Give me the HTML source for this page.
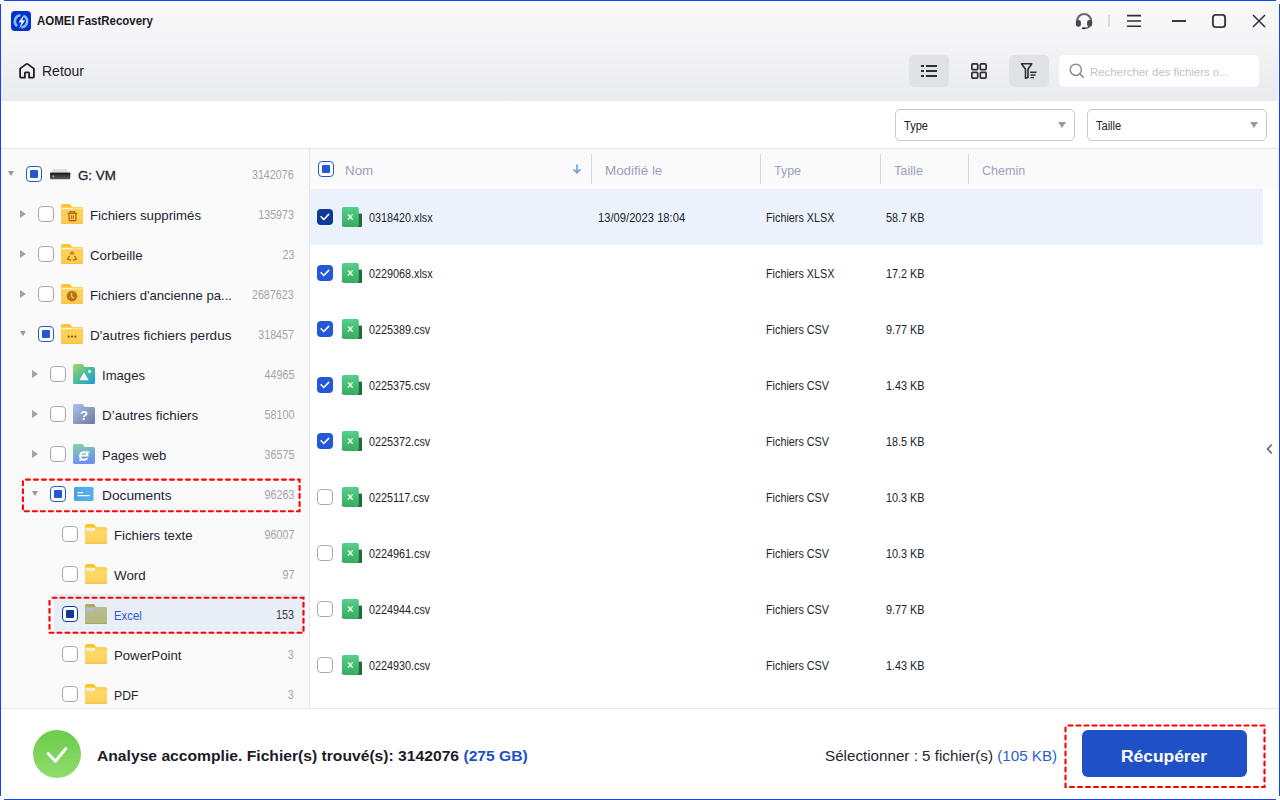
<!DOCTYPE html>
<html><head><meta charset="utf-8">
<style>
*{margin:0;padding:0;box-sizing:border-box}
html,body{width:1280px;height:800px;overflow:hidden;background:#fff;font-family:"Liberation Sans",sans-serif;color:#1f1f2b}
.a{position:absolute}
#win{position:absolute;left:0;top:0;width:1280px;height:800px;border:1px solid #1f4cf6;border-radius:4px;pointer-events:none;z-index:50}
#hdr{left:0;top:0;width:1280px;height:101px;background:linear-gradient(#f9f9f9 0px,#f5f5f7 40px,#e9eaee 101px)}
.t{position:absolute;white-space:nowrap;line-height:1}
.btn{position:absolute;border-radius:5px;background:#e1e2e6}
#left{left:0;top:149px;width:309px;height:559px;background:#fafafa;overflow:hidden}
#sep{left:309px;top:149px;width:1px;height:559px;background:#e6e6ee}
#thead{left:310px;top:149px;width:970px;height:40px;background:#fafafa}
.hs{position:absolute;top:154px;width:1px;height:30px;background:#d6d7de}
.ht{position:absolute;top:164px;font-size:13.4px;color:#9ba0bf;line-height:1;white-space:nowrap}
.cb{position:absolute;width:16px;height:16px;border-radius:4px;border:1.3px solid #a9a9ad;background:#fff}
.cbp{border:1.5px solid #2358d6}
.cbp::after{content:"";position:absolute;left:2.7px;top:2.7px;width:8px;height:8px;background:#2358d6;border-radius:1px}
.cbn{border:1.5px solid #0c3a96}
.cbn::after{content:"";position:absolute;left:2.7px;top:2.7px;width:8px;height:8px;background:#0c3a96;border-radius:1px}
.cbc{background:#2358d6;border:none}
.cbd{background:#0c3a96;border:none}
.tl{position:absolute;font-size:13.5px;line-height:1;white-space:nowrap;color:#222430;transform-origin:left center}
.cnt{position:absolute;right:15px;font-size:12px;color:#a3a3a8;line-height:1;text-align:right;transform:scaleX(0.895);transform-origin:right center;white-space:nowrap}
.arr{position:absolute;width:0;height:0}
.ad{border-left:3.6px solid transparent;border-right:3.6px solid transparent;border-top:5.5px solid #9a9a9e}
.ar{border-top:4px solid transparent;border-bottom:4px solid transparent;border-left:6px solid #a3a3a7}
.row{position:absolute;left:310px;width:953px;height:56px}
.rt{position:absolute;font-size:12px;line-height:1;white-space:nowrap;color:#22242c;transform:scaleX(0.9);transform-origin:left center}
</style></head><body>
<div class="a" style="left:4px;top:0;width:1272px;height:1px;background:#1144ff;z-index:50"></div>
<div class="a" style="left:4px;top:799px;width:1272px;height:1px;background:#1144ff;z-index:50"></div>
<div class="a" style="left:0;top:4px;width:1px;height:792px;background:#1144ff;z-index:50"></div>
<div class="a" style="left:1279px;top:4px;width:1px;height:792px;background:#1144ff;z-index:50"></div>
<div class="a" style="left:1278px;top:0;width:1px;height:800px;background:#fff;z-index:49"></div>
<div class="a" id="hdr"></div>

<!-- title bar -->
<svg class="a" style="left:11px;top:11px" width="20" height="20" viewBox="0 0 20 20">
  <rect x="0" y="0" width="20" height="20" rx="4" fill="#0533c9"/>
  <path d="M9.47 4.22 A6.1 6.1 0 0 0 6.16 15.04" stroke="#80c2f8" stroke-width="2.5" fill="none"/>
  <path d="M12.86 4.91 A6.1 6.1 0 0 1 10.43 16.39" stroke="#80c2f8" stroke-width="2.5" fill="none"/>
  <path d="M13.3 3.4 L7.5 11.5 L10.6 11.2 L8.0 18.1 L14.1 9.2 L11.2 9.5 Z" fill="#fff"/>
</svg>
<div class="t" style="left:37px;top:15px;font-size:12px;font-weight:bold;color:#1a1a24;transform:scaleX(0.955);transform-origin:left">AOMEI FastRecovery</div>

<!-- headset -->
<svg class="a" style="left:1075px;top:12px" width="18" height="18" viewBox="0 0 18 18">
  <path d="M2.1 11 V9 A7 7 0 0 1 16.1 9 V11" stroke="#6a6a6e" stroke-width="2.2" fill="none"/>
  <rect x="0.9" y="7.9" width="5" height="6.9" rx="2.3" fill="#48484c"/>
  <rect x="12.1" y="7.9" width="5" height="6.9" rx="2.3" fill="#48484c"/>
  <path d="M14.6 14 Q13.6 16.2 9.6 16.3" stroke="#48484c" stroke-width="1.3" fill="none"/>
  <ellipse cx="8.6" cy="16.3" rx="1.9" ry="1.05" fill="#2e2e32"/>
</svg>
<div class="a" style="left:1108px;top:15px;width:2px;height:12px;background:#dcdde2"></div>
<svg class="a" style="left:1126px;top:13px" width="16" height="16" viewBox="0 0 16 16">
  <path d="M1 2.6H15M1 8H15M1 13.3H15" stroke="#2e2e34" stroke-width="1.6"/>
</svg>
<div class="a" style="left:1172px;top:20px;width:14px;height:1.8px;background:#3a3a40"></div>
<svg class="a" style="left:1211px;top:13px" width="16" height="16" viewBox="0 0 16 16"><rect x="1.9" y="1.9" width="12.2" height="12.2" rx="2.6" stroke="#38383e" stroke-width="1.9" fill="none"/></svg>
<svg class="a" style="left:1252px;top:14px" width="14" height="14" viewBox="0 0 14 14">
  <path d="M1 1L13 13M13 1L1 13" stroke="#2e2e34" stroke-width="1.5"/>
</svg>

<!-- toolbar -->
<svg class="a" style="left:19px;top:62px" width="17" height="17" viewBox="0 0 17 17">
  <path d="M1.1 6.6 L7.2 2.1 Q8 1.5 8.8 2.1 L14.9 6.6 V14.7 Q14.9 15.7 13.9 15.7 H10.1 V11 Q10.1 10.3 9.4 10.3 H6.6 Q5.9 10.3 5.9 11 V15.7 H2.1 Q1.1 15.7 1.1 14.7 Z" stroke="#1e1e24" stroke-width="1.8" fill="none" stroke-linejoin="round"/>
</svg>
<div class="t" style="left:42px;top:64px;font-size:14px;color:#1c1c26">Retour</div>

<div class="btn" style="left:909px;top:55px;width:40px;height:32px"></div>
<svg class="a" style="left:920px;top:63px" width="18" height="16" viewBox="0 0 18 16">
  <path d="M1 3H4M6 3H17M1 8H4M6 8H17M1 13H4M6 13H17" stroke="#2e2e34" stroke-width="1.8"/>
</svg>
<svg class="a" style="left:971px;top:63px" width="16" height="16" viewBox="0 0 16 16">
  <rect x="0.9" y="0.9" width="5.8" height="5.8" rx="1" stroke="#2e2e34" stroke-width="1.7" fill="none"/>
  <rect x="9.3" y="0.9" width="5.8" height="5.8" rx="1" stroke="#2e2e34" stroke-width="1.7" fill="none"/>
  <rect x="0.9" y="9.3" width="5.8" height="5.8" rx="1" stroke="#2e2e34" stroke-width="1.7" fill="none"/>
  <rect x="9.3" y="9.3" width="5.8" height="5.8" rx="1" stroke="#2e2e34" stroke-width="1.7" fill="none"/>
</svg>
<div class="btn" style="left:1009px;top:55px;width:40px;height:32px"></div>
<svg class="a" style="left:1020px;top:62px" width="18" height="18" viewBox="0 0 18 18">
  <path d="M1.5 1.8 H11.8 L8 7.2 V15.5 L5.5 16.2 V7.2 Z" stroke="#2e2e34" stroke-width="1.6" fill="none" stroke-linejoin="round"/>
  <path d="M10 10.3H16.5M10.5 13H15.5M10.5 15.6H14" stroke="#2e2e34" stroke-width="1.4"/>
</svg>
<div class="a" style="left:1059px;top:55px;width:200px;height:32px;background:#fff;border-radius:5px"></div>
<svg class="a" style="left:1069px;top:63px" width="16" height="16" viewBox="0 0 16 16">
  <circle cx="6.8" cy="6.8" r="5.6" stroke="#8a8a90" stroke-width="1.5" fill="none"/>
  <path d="M10.8 10.8L14.6 14.6" stroke="#8a8a90" stroke-width="1.6"/>
</svg>
<div class="t" style="left:1090px;top:67px;font-size:11.4px;color:#c2c2c6">Rechercher des fichiers o...</div>

<!-- filter row -->
<div class="a" style="left:1px;top:148px;width:1278px;height:1px;background:#e3e4eb"></div>
<div class="a" style="left:895px;top:109px;width:180px;height:32px;border:1px solid #c9c9cd;border-radius:5px;background:#fff"></div>
<div class="t" style="left:904px;top:120px;font-size:12px;color:#222;transform:scaleX(0.92);transform-origin:left">Type</div>
<div class="arr a" style="left:1057.5px;top:122px;border-left:4.5px solid transparent;border-right:4.5px solid transparent;border-top:6px solid #9a9a9e"></div>
<div class="a" style="left:1087px;top:109px;width:180px;height:32px;border:1px solid #c9c9cd;border-radius:5px;background:#fff"></div>
<div class="t" style="left:1096px;top:120px;font-size:12px;color:#222;transform:scaleX(0.92);transform-origin:left">Taille</div>
<div class="arr a" style="left:1249.5px;top:122px;border-left:4.5px solid transparent;border-right:4.5px solid transparent;border-top:6px solid #9a9a9e"></div>

<!-- left tree -->
<div class="a" id="left">
<svg width="0" height="0" style="position:absolute"><defs>
<linearGradient id="fy" x1="0" y1="0" x2="0" y2="1"><stop offset="0" stop-color="#fdd45c"/><stop offset="1" stop-color="#fccb4a"/></linearGradient>
<linearGradient id="fy2" x1="0" y1="0" x2="0" y2="1"><stop offset="0" stop-color="#fedb6e"/><stop offset="1" stop-color="#fccf54"/></linearGradient>
<linearGradient id="fo" x1="0" y1="0" x2="0" y2="1"><stop offset="0" stop-color="#b8bd8e"/><stop offset="1" stop-color="#b3b67e"/></linearGradient>
<linearGradient id="fimg" x1="0" y1="0" x2="1" y2="1"><stop offset="0" stop-color="#a6d868"/><stop offset=".5" stop-color="#4cbc96"/><stop offset="1" stop-color="#1a98e8"/></linearGradient>
<linearGradient id="fq" x1="0" y1="0" x2="1" y2="1"><stop offset="0" stop-color="#a8c4ee"/><stop offset="1" stop-color="#72769c"/></linearGradient>
<linearGradient id="fie" x1="0" y1="0" x2="0.3" y2="1"><stop offset="0" stop-color="#84d898"/><stop offset=".45" stop-color="#78b6cc"/><stop offset="1" stop-color="#7090ee"/></linearGradient>
<linearGradient id="fdoc" x1="0" y1="0" x2="1" y2="0"><stop offset="0" stop-color="#4c9ae6"/><stop offset=".3" stop-color="#52a8ea"/><stop offset="1" stop-color="#56b0ec"/></linearGradient>
<linearGradient id="xl" x1="0" y1="0" x2="0" y2="1"><stop offset="0" stop-color="#55cf8a"/><stop offset="1" stop-color="#3aaa62"/></linearGradient>
<linearGradient id="drv" x1="0" y1="0" x2="0" y2="1"><stop offset="0" stop-color="#1e1e1e"/><stop offset="1" stop-color="#5a5a5a"/></linearGradient>
</defs></svg>
<div class="arr ad" style="left:7.5px;top:22px"></div>
<div class="cb cbp" style="left:26px;top:17px"></div>
<svg class="a" style="left:49px;top:19px" width="22" height="12" viewBox="0 0 22 12"><path d="M4.6 1H17.4L20.4 5H1.6Z" fill="#dfdfe3"/><rect x="1" y="4.8" width="20.3" height="6.4" rx="1" fill="url(#drv)"/><rect x="1" y="4.8" width="20.3" height="1.3" fill="#1a1a1a"/><circle cx="4.5" cy="8.3" r="1.1" fill="#46dc46"/></svg>
<div class="tl" style="left:78px;top:20.0px;color:#222430;transform:scaleX(0.988);-webkit-text-stroke:0.3px #222430">G: VM</div>
<div class="cnt" style="top:20.2px;color:#a3a3a8">3142076</div>
<div class="arr ar" style="left:20px;top:61px"></div>
<div class="cb " style="left:38px;top:57px"></div>
<svg class="a" style="left:61px;top:55px" width="22" height="20" viewBox="0 0 22 20"><path d="M0 1.8Q0 0 1.8 0H8.4Q9.3 0 9.8 0.9L11.2 3.6H0Z" fill="#fbc42a"/><rect x="0" y="3" width="22" height="17" rx="1.4" fill="url(#fy)"/><rect x="1.2" y="4" width="10" height="1.1" fill="#fff" opacity=".85"/><rect x="11" y="4" width="9.5" height="1" fill="#fff" opacity=".35"/><rect x="0.6" y="19" width="20.8" height="1" fill="#f0bd48" opacity=".7"/><path d="M6.6 9.3H16.2" stroke="#b06a1e" stroke-width="1.4"/><path d="M9.3 9.2V7.6H13.6V9.2" stroke="#b06a1e" stroke-width="1.3" fill="none"/><path d="M8.1 10V15.8Q8.1 16.8 9.1 16.8H13.9Q14.9 16.8 14.9 15.8V10" stroke="#b06a1e" stroke-width="1.4" fill="none"/><path d="M10.6 11.2V15.2M12.4 11.2V15.2" stroke="#b06a1e" stroke-width="1.1"/></svg>
<div class="tl" style="left:90px;top:60.0px;color:#222430;transform:scaleX(0.98)">Fichiers supprimés</div>
<div class="cnt" style="top:60.2px;color:#a3a3a8">135973</div>
<div class="arr ar" style="left:20px;top:101px"></div>
<div class="cb " style="left:38px;top:97px"></div>
<svg class="a" style="left:61px;top:95px" width="22" height="20" viewBox="0 0 22 20"><path d="M0 1.8Q0 0 1.8 0H8.4Q9.3 0 9.8 0.9L11.2 3.6H0Z" fill="#fbc42a"/><rect x="0" y="3" width="22" height="17" rx="1.4" fill="url(#fy)"/><rect x="1.2" y="4" width="10" height="1.1" fill="#fff" opacity=".85"/><rect x="11" y="4" width="9.5" height="1" fill="#fff" opacity=".35"/><rect x="0.6" y="19" width="20.8" height="1" fill="#f0bd48" opacity=".7"/><path d="M9.4 10.1L11 7.9L12.6 10.1M8.2 12.6L6.6 15.2L9.6 15.9M13.8 12.6L15.4 15.2L12.4 15.9" stroke="#b87222" stroke-width="1.5" fill="none" stroke-linecap="round" stroke-linejoin="round"/></svg>
<div class="tl" style="left:90px;top:100.0px;color:#222430;transform:scaleX(0.986)">Corbeille</div>
<div class="cnt" style="top:100.2px;color:#a3a3a8">23</div>
<div class="arr ar" style="left:20px;top:141px"></div>
<div class="cb " style="left:38px;top:137px"></div>
<svg class="a" style="left:61px;top:135px" width="22" height="20" viewBox="0 0 22 20"><path d="M0 1.8Q0 0 1.8 0H8.4Q9.3 0 9.8 0.9L11.2 3.6H0Z" fill="#fbc42a"/><rect x="0" y="3" width="22" height="17" rx="1.4" fill="url(#fy)"/><rect x="1.2" y="4" width="10" height="1.1" fill="#fff" opacity=".85"/><rect x="11" y="4" width="9.5" height="1" fill="#fff" opacity=".35"/><rect x="0.6" y="19" width="20.8" height="1" fill="#f0bd48" opacity=".7"/><circle cx="11" cy="12.1" r="5.3" fill="#b8701e"/><path d="M10.6 8.8V12.4L12.6 14.4" stroke="#fcd462" stroke-width="1.2" fill="none"/></svg>
<div class="tl" style="left:90px;top:140.0px;color:#222430;transform:scaleX(0.973)">Fichiers d'ancienne pa...</div>
<div class="cnt" style="top:140.2px;color:#a3a3a8">2687623</div>
<div class="arr ad" style="left:19.5px;top:182px"></div>
<div class="cb cbp" style="left:38px;top:177px"></div>
<svg class="a" style="left:61px;top:175px" width="22" height="20" viewBox="0 0 22 20"><path d="M0 1.8Q0 0 1.8 0H8.4Q9.3 0 9.8 0.9L11.2 3.6H0Z" fill="#fbc42a"/><rect x="0" y="3" width="22" height="17" rx="1.4" fill="url(#fy)"/><rect x="1.2" y="4" width="10" height="1.1" fill="#fff" opacity=".85"/><rect x="11" y="4" width="9.5" height="1" fill="#fff" opacity=".35"/><rect x="0.6" y="19" width="20.8" height="1" fill="#f0bd48" opacity=".7"/><circle cx="7.6" cy="12.6" r="1.05" fill="#7a4e10"/><circle cx="11" cy="12.6" r="1.05" fill="#7a4e10"/><circle cx="14.4" cy="12.6" r="1.05" fill="#7a4e10"/></svg>
<div class="tl" style="left:90px;top:180.0px;color:#222430;transform:scaleX(1.0)">D'autres fichiers perdus</div>
<div class="cnt" style="top:180.2px;color:#a3a3a8">318457</div>
<div class="arr ar" style="left:32px;top:221px"></div>
<div class="cb " style="left:50px;top:217px"></div>
<svg class="a" style="left:73px;top:215px" width="22" height="20" viewBox="0 0 22 20"><path d="M0 1.6Q0 0 1.6 0H9.6L11.6 3H20.4Q22 3 22 4.6V18.4Q22 20 20.4 20H1.6Q0 20 0 18.4Z" fill="url(#fimg)"/><path d="M6.3 16.2L11 8.2L15.7 16.2Z" fill="#f4f4fb"/><circle cx="16.5" cy="7.5" r="1.4" fill="#fff"/></svg>
<div class="tl" style="left:102px;top:220.0px;color:#222430;transform:scaleX(0.971)">Images</div>
<div class="cnt" style="top:220.2px;color:#a3a3a8">44965</div>
<div class="arr ar" style="left:32px;top:261px"></div>
<div class="cb " style="left:50px;top:257px"></div>
<svg class="a" style="left:73px;top:255px" width="22" height="20" viewBox="0 0 22 20"><path d="M0 1.6Q0 0 1.6 0H9.6L11.6 3H20.4Q22 3 22 4.6V18.4Q22 20 20.4 20H1.6Q0 20 0 18.4Z" fill="url(#fq)"/><text x="11" y="16.2" font-family="Liberation Sans" font-size="13" font-weight="bold" fill="#fff" text-anchor="middle">?</text></svg>
<div class="tl" style="left:102px;top:260.0px;color:#222430;transform:scaleX(0.995)">D’autres fichiers</div>
<div class="cnt" style="top:260.2px;color:#a3a3a8">58100</div>
<div class="arr ar" style="left:32px;top:301px"></div>
<div class="cb " style="left:50px;top:297px"></div>
<svg class="a" style="left:73px;top:295px" width="22" height="20" viewBox="0 0 22 20"><path d="M0 1.6Q0 0 1.6 0H9.6L11.6 3H20.4Q22 3 22 4.6V18.4Q22 20 20.4 20H1.6Q0 20 0 18.4Z" fill="url(#fie)"/><path d="M7.2 11.6H14.6Q14.6 8.2 11 8.2Q7.1 8.2 7.1 12Q7.1 15.8 11 15.8Q13.2 15.8 14.2 14.3" stroke="#fff" stroke-width="1.9" fill="none"/><path d="M12.8 7.6Q16.8 6.2 15.6 9.4M7.6 14.6Q5.2 17.6 8.2 16.4" stroke="#fff" stroke-width="1" fill="none"/></svg>
<div class="tl" style="left:102px;top:300.0px;color:#222430;transform:scaleX(0.962)">Pages web</div>
<div class="cnt" style="top:300.2px;color:#a3a3a8">36575</div>
<div class="arr ad" style="left:31.5px;top:342px"></div>
<div class="cb cbp" style="left:50px;top:337px"></div>
<svg class="a" style="left:74.2px;top:338px" width="20" height="15" viewBox="0 0 20 15"><rect x="0" y="0" width="19.5" height="14" rx="1.5" fill="url(#fdoc)"/><path d="M4 5.6H8.6M4 8.6H15.2" stroke="#fff" stroke-width="1.4" stroke-linecap="round"/></svg>
<div class="tl" style="left:102px;top:340.0px;color:#222430;transform:scaleX(1.018)">Documents</div>
<div class="cnt" style="top:340.2px;color:#a3a3a8">96263</div>
<div class="cb " style="left:62px;top:377px"></div>
<svg class="a" style="left:85px;top:375px" width="22" height="20" viewBox="0 0 22 20"><path d="M0 1.8Q0 0 1.8 0H8.4Q9.3 0 9.8 0.9L11.2 3.6H0Z" fill="#fbc42a"/><rect x="0" y="3" width="22" height="17" rx="1.4" fill="url(#fy)"/><rect x="1.3" y="4.1" width="8.6" height="2.7" fill="#f3f3fb"/><rect x="0" y="6.5" width="22" height="13.5" rx="1.2" fill="url(#fy2)"/><rect x="0.6" y="19" width="20.8" height="1" fill="#f0bd48" opacity=".7"/></svg>
<div class="tl" style="left:114px;top:380.0px;color:#222430;transform:scaleX(0.978)">Fichiers texte</div>
<div class="cnt" style="top:380.2px;color:#a3a3a8">96007</div>
<div class="cb " style="left:62px;top:417px"></div>
<svg class="a" style="left:85px;top:415px" width="22" height="20" viewBox="0 0 22 20"><path d="M0 1.8Q0 0 1.8 0H8.4Q9.3 0 9.8 0.9L11.2 3.6H0Z" fill="#fbc42a"/><rect x="0" y="3" width="22" height="17" rx="1.4" fill="url(#fy)"/><rect x="1.3" y="4.1" width="8.6" height="2.7" fill="#f3f3fb"/><rect x="0" y="6.5" width="22" height="13.5" rx="1.2" fill="url(#fy2)"/><rect x="0.6" y="19" width="20.8" height="1" fill="#f0bd48" opacity=".7"/></svg>
<div class="tl" style="left:114px;top:420.0px;color:#222430;transform:scaleX(0.992)">Word</div>
<div class="cnt" style="top:420.2px;color:#a3a3a8">97</div>
<div class="a" style="left:54px;top:445px;width:251px;height:40px;background:#e8edf6"></div>
<div class="cb cbn" style="left:62px;top:457px"></div>
<svg class="a" style="left:85px;top:455px" width="22" height="20" viewBox="0 0 22 20"><path d="M0 1.8Q0 0 1.8 0H8.4Q9.3 0 9.8 0.9L11.2 3.6H0Z" fill="#b0a862"/><rect x="0" y="3" width="22" height="17" rx="1.4" fill="url(#fo)"/><rect x="1.3" y="4.1" width="8.6" height="2.8" fill="#a8bfea"/><rect x="0" y="6.6" width="22" height="13.4" rx="1.2" fill="url(#fo)"/><rect x="0.6" y="19" width="20.8" height="1" fill="#a89e58" opacity=".7"/></svg>
<div class="tl" style="left:114px;top:460.0px;color:#2a5ad8;transform:scaleX(0.84)">Excel</div>
<div class="cnt" style="top:460.2px;color:#3a3a44">153</div>
<div class="cb " style="left:62px;top:497px"></div>
<svg class="a" style="left:85px;top:495px" width="22" height="20" viewBox="0 0 22 20"><path d="M0 1.8Q0 0 1.8 0H8.4Q9.3 0 9.8 0.9L11.2 3.6H0Z" fill="#fbc42a"/><rect x="0" y="3" width="22" height="17" rx="1.4" fill="url(#fy)"/><rect x="1.3" y="4.1" width="8.6" height="2.7" fill="#f3f3fb"/><rect x="0" y="6.5" width="22" height="13.5" rx="1.2" fill="url(#fy2)"/><rect x="0.6" y="19" width="20.8" height="1" fill="#f0bd48" opacity=".7"/></svg>
<div class="tl" style="left:114px;top:500.0px;color:#222430;transform:scaleX(0.976)">PowerPoint</div>
<div class="cnt" style="top:500.2px;color:#a3a3a8">3</div>
<div class="cb " style="left:62px;top:537px"></div>
<svg class="a" style="left:85px;top:535px" width="22" height="20" viewBox="0 0 22 20"><path d="M0 1.8Q0 0 1.8 0H8.4Q9.3 0 9.8 0.9L11.2 3.6H0Z" fill="#fbc42a"/><rect x="0" y="3" width="22" height="17" rx="1.4" fill="url(#fy)"/><rect x="1.3" y="4.1" width="8.6" height="2.7" fill="#f3f3fb"/><rect x="0" y="6.5" width="22" height="13.5" rx="1.2" fill="url(#fy2)"/><rect x="0.6" y="19" width="20.8" height="1" fill="#f0bd48" opacity=".7"/></svg>
<div class="tl" style="left:114px;top:540.0px;color:#222430;transform:scaleX(0.904)">PDF</div>
<div class="cnt" style="top:540.2px;color:#a3a3a8">3</div>
</div>
<div class="a" id="sep"></div>

<!-- table header -->
<div class="a" id="thead"></div>
<div class="cb cbp" style="left:318px;top:161px"></div>
<div class="ht" style="left:345px">Nom</div>
<svg class="a" style="left:572px;top:164px" width="10" height="10" viewBox="0 0 10 10">
  <path d="M5 0.5V8.5M1.5 5.2L5 8.8L8.5 5.2" stroke="#6a9de0" stroke-width="1.6" fill="none"/>
</svg>
<div class="hs" style="left:591px"></div>
<div class="ht" style="left:605px">Modifié le</div>
<div class="hs" style="left:760px"></div>
<div class="ht" style="left:774px;transform:scaleX(0.93);transform-origin:left">Type</div>
<div class="hs" style="left:880px"></div>
<div class="ht" style="left:894px;transform:scaleX(0.95);transform-origin:left">Taille</div>
<div class="hs" style="left:968px"></div>
<div class="ht" style="left:982px;transform:scaleX(0.935);transform-origin:left">Chemin</div>

<div id="rows">
<div class="a" style="left:310px;top:189px;width:953px;height:56px;background:#ecf2fb"></div>
<div class="cb cbd" style="left:317px;top:209px"><svg class="a" style="left:0;top:0" width="16" height="16" viewBox="0 0 16 16"><path d="M4.1 7.8L6.8 10.5L11.7 5.4" stroke="#fff" stroke-width="1.6" fill="none" stroke-linecap="round" stroke-linejoin="round"/></svg></div>
<svg class="a" style="left:342px;top:207px" width="21" height="21" viewBox="0 0 21 21"><rect x="13" y="6.5" width="7" height="13.5" rx="1.2" fill="#1e6b3c"/><rect x="0" y="0" width="16.8" height="20" rx="1.8" fill="url(#xl)"/><path d="M6 7.4L10.6 12.6M10.6 7.4L6 12.6" stroke="#f4fff4" stroke-width="1.4"/></svg>
<div class="rt" style="left:369px;top:212.3px">0318420.xlsx</div>
<div class="rt" style="left:597.5px;top:212.3px;transform:scaleX(0.933)">13/09/2023 18:04</div>
<div class="rt" style="left:766px;top:212.3px">Fichiers XLSX</div>
<div class="rt" style="left:886px;top:212.3px">58.7 KB</div>
<div class="cb cbc" style="left:317px;top:265px"><svg class="a" style="left:0;top:0" width="16" height="16" viewBox="0 0 16 16"><path d="M4.1 7.8L6.8 10.5L11.7 5.4" stroke="#fff" stroke-width="1.6" fill="none" stroke-linecap="round" stroke-linejoin="round"/></svg></div>
<svg class="a" style="left:342px;top:263px" width="21" height="21" viewBox="0 0 21 21"><rect x="13" y="6.5" width="7" height="13.5" rx="1.2" fill="#1e6b3c"/><rect x="0" y="0" width="16.8" height="20" rx="1.8" fill="url(#xl)"/><path d="M6 7.4L10.6 12.6M10.6 7.4L6 12.6" stroke="#f4fff4" stroke-width="1.4"/></svg>
<div class="rt" style="left:369px;top:268.3px">0229068.xlsx</div>
<div class="rt" style="left:766px;top:268.3px">Fichiers XLSX</div>
<div class="rt" style="left:886px;top:268.3px">17.2 KB</div>
<div class="cb cbc" style="left:317px;top:321px"><svg class="a" style="left:0;top:0" width="16" height="16" viewBox="0 0 16 16"><path d="M4.1 7.8L6.8 10.5L11.7 5.4" stroke="#fff" stroke-width="1.6" fill="none" stroke-linecap="round" stroke-linejoin="round"/></svg></div>
<svg class="a" style="left:342px;top:319px" width="21" height="21" viewBox="0 0 21 21"><rect x="13" y="6.5" width="7" height="13.5" rx="1.2" fill="#1e6b3c"/><rect x="0" y="0" width="16.8" height="20" rx="1.8" fill="url(#xl)"/><path d="M6 7.4L10.6 12.6M10.6 7.4L6 12.6" stroke="#f4fff4" stroke-width="1.4"/></svg>
<div class="rt" style="left:369px;top:324.3px">0225389.csv</div>
<div class="rt" style="left:766px;top:324.3px">Fichiers CSV</div>
<div class="rt" style="left:886px;top:324.3px">9.77 KB</div>
<div class="cb cbc" style="left:317px;top:377px"><svg class="a" style="left:0;top:0" width="16" height="16" viewBox="0 0 16 16"><path d="M4.1 7.8L6.8 10.5L11.7 5.4" stroke="#fff" stroke-width="1.6" fill="none" stroke-linecap="round" stroke-linejoin="round"/></svg></div>
<svg class="a" style="left:342px;top:375px" width="21" height="21" viewBox="0 0 21 21"><rect x="13" y="6.5" width="7" height="13.5" rx="1.2" fill="#1e6b3c"/><rect x="0" y="0" width="16.8" height="20" rx="1.8" fill="url(#xl)"/><path d="M6 7.4L10.6 12.6M10.6 7.4L6 12.6" stroke="#f4fff4" stroke-width="1.4"/></svg>
<div class="rt" style="left:369px;top:380.3px">0225375.csv</div>
<div class="rt" style="left:766px;top:380.3px">Fichiers CSV</div>
<div class="rt" style="left:886px;top:380.3px">1.43 KB</div>
<div class="cb cbc" style="left:317px;top:433px"><svg class="a" style="left:0;top:0" width="16" height="16" viewBox="0 0 16 16"><path d="M4.1 7.8L6.8 10.5L11.7 5.4" stroke="#fff" stroke-width="1.6" fill="none" stroke-linecap="round" stroke-linejoin="round"/></svg></div>
<svg class="a" style="left:342px;top:431px" width="21" height="21" viewBox="0 0 21 21"><rect x="13" y="6.5" width="7" height="13.5" rx="1.2" fill="#1e6b3c"/><rect x="0" y="0" width="16.8" height="20" rx="1.8" fill="url(#xl)"/><path d="M6 7.4L10.6 12.6M10.6 7.4L6 12.6" stroke="#f4fff4" stroke-width="1.4"/></svg>
<div class="rt" style="left:369px;top:436.3px">0225372.csv</div>
<div class="rt" style="left:766px;top:436.3px">Fichiers CSV</div>
<div class="rt" style="left:886px;top:436.3px">18.5 KB</div>
<div class="cb " style="left:317px;top:489px"></div>
<svg class="a" style="left:342px;top:487px" width="21" height="21" viewBox="0 0 21 21"><rect x="13" y="6.5" width="7" height="13.5" rx="1.2" fill="#1e6b3c"/><rect x="0" y="0" width="16.8" height="20" rx="1.8" fill="url(#xl)"/><path d="M6 7.4L10.6 12.6M10.6 7.4L6 12.6" stroke="#f4fff4" stroke-width="1.4"/></svg>
<div class="rt" style="left:369px;top:492.3px">0225117.csv</div>
<div class="rt" style="left:766px;top:492.3px">Fichiers CSV</div>
<div class="rt" style="left:886px;top:492.3px">10.3 KB</div>
<div class="cb " style="left:317px;top:545px"></div>
<svg class="a" style="left:342px;top:543px" width="21" height="21" viewBox="0 0 21 21"><rect x="13" y="6.5" width="7" height="13.5" rx="1.2" fill="#1e6b3c"/><rect x="0" y="0" width="16.8" height="20" rx="1.8" fill="url(#xl)"/><path d="M6 7.4L10.6 12.6M10.6 7.4L6 12.6" stroke="#f4fff4" stroke-width="1.4"/></svg>
<div class="rt" style="left:369px;top:548.3px">0224961.csv</div>
<div class="rt" style="left:766px;top:548.3px">Fichiers CSV</div>
<div class="rt" style="left:886px;top:548.3px">10.3 KB</div>
<div class="cb " style="left:317px;top:601px"></div>
<svg class="a" style="left:342px;top:599px" width="21" height="21" viewBox="0 0 21 21"><rect x="13" y="6.5" width="7" height="13.5" rx="1.2" fill="#1e6b3c"/><rect x="0" y="0" width="16.8" height="20" rx="1.8" fill="url(#xl)"/><path d="M6 7.4L10.6 12.6M10.6 7.4L6 12.6" stroke="#f4fff4" stroke-width="1.4"/></svg>
<div class="rt" style="left:369px;top:604.3px">0224944.csv</div>
<div class="rt" style="left:766px;top:604.3px">Fichiers CSV</div>
<div class="rt" style="left:886px;top:604.3px">9.77 KB</div>
<div class="cb " style="left:317px;top:657px"></div>
<svg class="a" style="left:342px;top:655px" width="21" height="21" viewBox="0 0 21 21"><rect x="13" y="6.5" width="7" height="13.5" rx="1.2" fill="#1e6b3c"/><rect x="0" y="0" width="16.8" height="20" rx="1.8" fill="url(#xl)"/><path d="M6 7.4L10.6 12.6M10.6 7.4L6 12.6" stroke="#f4fff4" stroke-width="1.4"/></svg>
<div class="rt" style="left:369px;top:660.3px">0224930.csv</div>
<div class="rt" style="left:766px;top:660.3px">Fichiers CSV</div>
<div class="rt" style="left:886px;top:660.3px">1.43 KB</div>
</div><!--/rows-->

<!-- chevron -->
<svg class="a" style="left:1265px;top:443px" width="9" height="12" viewBox="0 0 9 12">
  <path d="M6.8 1.5L2.6 6L6.8 10.5" stroke="#5f6d94" stroke-width="1.8" fill="none"/>
</svg>

<!-- bottom bar -->
<div class="a" style="left:1px;top:708px;width:1278px;height:1px;background:#e6e6ec"></div>
<svg class="a" style="left:33px;top:730px" width="48" height="48" viewBox="0 0 48 48">
  <defs><linearGradient id="gg" x1="0" y1="0" x2="0" y2="1"><stop offset="0" stop-color="#6acc4a"/><stop offset="1" stop-color="#92dc6e"/></linearGradient></defs>
  <circle cx="24" cy="24" r="24" fill="url(#gg)"/>
  <path d="M15.2 23.7L22.5 31.1L32.8 18.6" stroke="#fff" stroke-width="3" fill="none" stroke-linecap="round" stroke-linejoin="round"/>
</svg>
<div class="t" style="left:97px;top:747.6px;font-size:15px;font-weight:bold;color:#1c1c28;transform:scaleX(1.044);transform-origin:left">Analyse accomplie. Fichier(s) trouvé(s): 3142076 <span style="color:#1f4fc6">(275 GB)</span></div>
<div class="t" style="left:825px;top:748px;font-size:15.2px;color:#26262e">Sélectionner : 5 fichier(s) <span style="color:#2f5fcf">(105 KB)</span></div>
<div class="a" style="left:1082px;top:730px;width:165px;height:47px;background:#1f50c5;border-radius:6px"></div>
<div class="t" style="left:1121px;top:747.5px;font-size:17.4px;font-weight:bold;color:#fff">Récupérer</div>

<!-- red dashed boxes -->
<svg class="a" style="left:0;top:0;z-index:40" width="1280" height="800">
  <rect x="22.9" y="479.6" width="276.7" height="31.6" fill="none" stroke="#ff0000" stroke-width="2.1" stroke-dasharray="4 4" stroke-linecap="round" stroke-dashoffset="-3"/>
  <rect x="49.5" y="597.8" width="254" height="35" fill="none" stroke="#ff0000" stroke-width="2.1" stroke-dasharray="4 4" stroke-linecap="round" stroke-dashoffset="-3"/>
  <rect x="1065.5" y="725.5" width="199" height="61.5" fill="none" stroke="#ff0000" stroke-width="2.1" stroke-dasharray="4 4" stroke-linecap="round" stroke-dashoffset="-3"/>
</svg>
</body></html>
